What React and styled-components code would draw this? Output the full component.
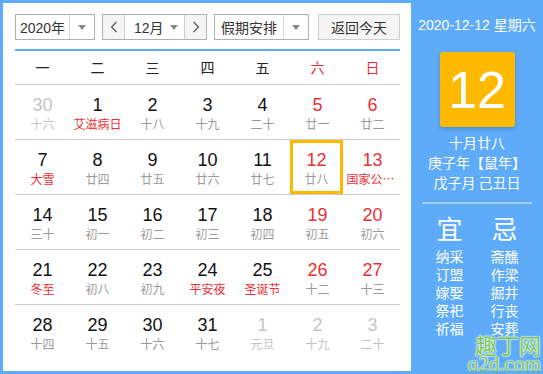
import React from "react";
import styled, { createGlobalStyle } from "styled-components";

const Global = createGlobalStyle`
  html, body { margin: 0; padding: 0; background: #fff; }
  body { font-family: "Noto Sans CJK SC", "Liberation Sans", sans-serif; }
  * { box-sizing: border-box; }
`;

const BLUE = "#5eabf9";
const RED = "#ec2f36";

const Frame = styled.div`
  position: relative;
  width: 543px;
  height: 374px;
  display: flex;
  border-top: 3px solid ${BLUE};
  border-bottom: 3px solid ${BLUE};
  border-left: 3px solid ${BLUE};
  overflow: hidden;
`;

const Main = styled.div`
  flex: 0 0 408px;
  padding: 11px 11px 0 12px;
  background: #fff;
  display: flex;
  flex-direction: column;
`;

const Toolbar = styled.div`
  display: flex;
  height: 26px;
  font-size: 14px;
  color: #333;
`;

const Select = styled.div`
  display: flex;
  width: ${(p) => p.$w}px;
  margin-right: ${(p) => p.$mr || 0}px;
  height: 26px;
  border: 1px solid #b0b0b0;
  background: #fff;
`;

const SelectText = styled.div`
  flex: 1;
  display: flex;
  align-items: center;
  justify-content: center;
  white-space: nowrap;
  font-family: "Liberation Sans", "Noto Sans CJK SC", sans-serif;
`;

const Caret = styled.div`
  flex: 0 0 ${(p) => p.$w || 24}px;
  display: flex;
  align-items: center;
  justify-content: center;
  border-left: ${(p) => (p.$line ? "1px solid #d4d4d4" : "none")};
  &::after {
    content: "";
    border-left: 4px solid transparent;
    border-right: 4px solid transparent;
    border-top: 5px solid #888;
  }
`;

const MonthGroup = styled.div`
  display: flex;
  width: 105px;
  margin-right: 7px;
  height: 26px;
  border: 1px solid #b0b0b0;
`;

const ArrowBtn = styled.div`
  flex: 0 0 ${(p) => p.$w}px;
  display: flex;
  align-items: center;
  justify-content: center;
  background: #f5f5f5;
  border-left: ${(p) => (p.$left ? "1px solid #d0d0d0" : "none")};
  border-right: ${(p) => (p.$right ? "1px solid #d0d0d0" : "none")};
`;

const MonthMid = styled.div`
  flex: 1;
  display: flex;
  align-items: center;
  background: #fff;
  padding: 0 2px 0 9px;
  white-space: nowrap;
  font-family: "Liberation Sans", "Noto Sans CJK SC", sans-serif;
`;

const MonthLabel = styled.span`
  flex: 1;
`;

const TodayBtn = styled.div`
  width: 82px;
  height: 26px;
  border: 1px solid #cfcfcf;
  background: #f5f5f5;
  display: flex;
  align-items: center;
  justify-content: center;
  margin-left: auto;
`;

const BlueRule = styled.div`
  height: 2px;
  background: ${BLUE};
  margin-top: 9px;
`;

const WeekHead = styled.div`
  display: grid;
  grid-template-columns: repeat(7, 55px);
  height: 34px;
  border-bottom: 1px solid #cccccc;
`;

const WeekDay = styled.div`
  display: flex;
  align-items: center;
  justify-content: center;
  font-size: 14px;
  padding-bottom: 2px;
  color: ${(p) => (p.$weekend ? RED : "#222")};
`;

const Week = styled.div`
  display: grid;
  grid-template-columns: repeat(7, 55px);
  height: 55px;
  border-bottom: ${(p) => (p.$last ? "none" : "1px solid #cccccc")};
`;

const Cell = styled.div`
  display: flex;
  flex-direction: column;
  align-items: center;
  padding-top: ${(p) => (p.$sel ? "7px" : "10px")};
  margin-right: ${(p) => (p.$sel ? "2px" : "0")};
  border: ${(p) => (p.$sel ? "3px solid #ffb800" : "none")};
  min-width: 0;
`;

const Num = styled.div`
  font-family: "Liberation Sans", Arial, sans-serif;
  font-size: 18px;
  line-height: 20px;
  color: ${(p) => (p.$out ? "#c4c4c4" : p.$weekend ? RED : "#111")};
`;

const Lunar = styled.div`
  font-size: 12px;
  line-height: 18px;
  max-width: 52px;
  white-space: nowrap;
  overflow: hidden;
  text-overflow: ellipsis;
  color: ${(p) => (p.$out ? "#c4c4c4" : p.$fest ? RED : "#9a9a9a")};
`;

const Side = styled.div`
  flex: 0 0 132px;
  background: ${BLUE};
  color: #fff;
  display: flex;
  flex-direction: column;
  align-items: center;
  padding-top: 12px;
`;

const DateLine = styled.div`
  font-size: 14px;
  line-height: 20px;
  font-family: "Liberation Sans", "Noto Sans CJK SC", sans-serif;
`;

const DayBox = styled.div`
  margin-top: 17px;
  width: 75px;
  height: 75px;
  background: #ffb900;
  border-radius: 3px;
  box-shadow: 0 2px 4px rgba(0, 0, 0, 0.18);
  display: flex;
  align-items: center;
  justify-content: center;
  font-family: "Liberation Sans", Arial, sans-serif;
  font-size: 52px;
  color: #fff;
`;

const LunarInfo = styled.div`
  margin-top: 5px;
  font-size: 14px;
  line-height: 20px;
  text-align: center;
`;

const SideRule = styled.div`
  margin-top: 10px;
  width: 110px;
  height: 2px;
  background: #a6cffb;
`;

const YiJi = styled.div`
  margin-top: 9px;
  display: grid;
  grid-template-columns: 55px 55px;
  width: 110px;
`;

const YiJiCol = styled.div`
  display: flex;
  flex-direction: column;
  align-items: center;
`;

const YiJiTitle = styled.div`
  font-size: 26px;
  line-height: 30px;
  margin-bottom: 4px;
`;

const YiJiItem = styled.div`
  font-size: 14px;
  line-height: 18px;
`;

const Watermark = styled.div`
  position: absolute;
  right: 2px;
  bottom: -3px;
  display: flex;
  flex-direction: column;
  align-items: flex-end;
  color: #79c653;
  text-shadow: 0 0 2px #fff, 0 0 2px #fff, 0 0 1px #fff;
  pointer-events: none;
`;

const WmCn = styled.div`
  font-size: 22px;
  line-height: 20px;
  font-family: "Noto Sans CJK SC", sans-serif;
`;

const WmEn = styled.div`
  font-size: 21px;
  line-height: 20px;
  font-family: "Liberation Serif", serif;
`;

const Chevron = ({ dir }) => (
  <svg width="8" height="12" viewBox="0 0 8 12">
    <polyline
      points={dir === "left" ? "6.5,1 1.5,6 6.5,11" : "1.5,1 6.5,6 1.5,11"}
      fill="none"
      stroke="#555"
      strokeWidth="1.2"
    />
  </svg>
);

const weeks = [
  [["30", "十六", 0, 1], ["1", "艾滋病日", 1], ["2", "十八"], ["3", "十九"], ["4", "二十"], ["5", "廿一"], ["6", "廿二"]],
  [["7", "大雪", 1], ["8", "廿四"], ["9", "廿五"], ["10", "廿六"], ["11", "廿七"], ["12", "廿八"], ["13", "国家公祭日", 1]],
  [["14", "三十"], ["15", "初一"], ["16", "初二"], ["17", "初三"], ["18", "初四"], ["19", "初五"], ["20", "初六"]],
  [["21", "冬至", 1], ["22", "初八"], ["23", "初九"], ["24", "平安夜", 1], ["25", "圣诞节", 1], ["26", "十二"], ["27", "十三"]],
  [["28", "十四"], ["29", "十五"], ["30", "十六"], ["31", "十七"], ["1", "元旦", 0, 1], ["2", "十九", 0, 1], ["3", "二十", 0, 1]],
];

const days = ["一", "二", "三", "四", "五", "六", "日"];
const yi = ["纳采", "订盟", "嫁娶", "祭祀", "祈福"];
const ji = ["斋醮", "作梁", "掘井", "行丧", "安葬"];

export default function App() {
  return (
    <>
      <Global />
      <Frame>
        <Main>
          <Toolbar>
            <Select $w={80} $mr={7}>
              <SelectText>2020年</SelectText>
              <Caret $line $w={25} />
            </Select>
            <MonthGroup>
              <ArrowBtn $w={22} $right>
                <Chevron dir="left" />
              </ArrowBtn>
              <MonthMid>
                <MonthLabel>12月</MonthLabel>
                <Caret $w={16} />
              </MonthMid>
              <ArrowBtn $w={22} $left>
                <Chevron dir="right" />
              </ArrowBtn>
            </MonthGroup>
            <Select $w={95}>
              <SelectText>假期安排</SelectText>
              <Caret $line $w={25} />
            </Select>
            <TodayBtn>返回今天</TodayBtn>
          </Toolbar>
          <BlueRule />
          <WeekHead>
            {days.map((d, i) => (
              <WeekDay key={d} $weekend={i >= 5}>{d}</WeekDay>
            ))}
          </WeekHead>
          {weeks.map((w, wi) => (
            <Week key={wi} $last={wi === weeks.length - 1}>
              {w.map(([n, l, fest, out], di) => (
                <Cell key={di} $sel={wi === 1 && di === 5}>
                  <Num $weekend={di >= 5} $out={out}>{n}</Num>
                  <Lunar $fest={fest} $out={out}>{l}</Lunar>
                </Cell>
              ))}
            </Week>
          ))}
        </Main>
        <Side>
          <DateLine>2020-12-12 星期六</DateLine>
          <DayBox>12</DayBox>
          <LunarInfo>
            十月廿八
            <br />
            庚子年【鼠年】
            <br />
            戊子月 己丑日
          </LunarInfo>
          <SideRule />
          <YiJi>
            <YiJiCol>
              <YiJiTitle>宜</YiJiTitle>
              {yi.map((t) => (
                <YiJiItem key={t}>{t}</YiJiItem>
              ))}
            </YiJiCol>
            <YiJiCol>
              <YiJiTitle>忌</YiJiTitle>
              {ji.map((t) => (
                <YiJiItem key={t}>{t}</YiJiItem>
              ))}
            </YiJiCol>
          </YiJi>
        </Side>
        <Watermark>
          <WmCn>趣丁网</WmCn>
          <WmEn>q2d.com</WmEn>
        </Watermark>
      </Frame>
    </>
  );
}
